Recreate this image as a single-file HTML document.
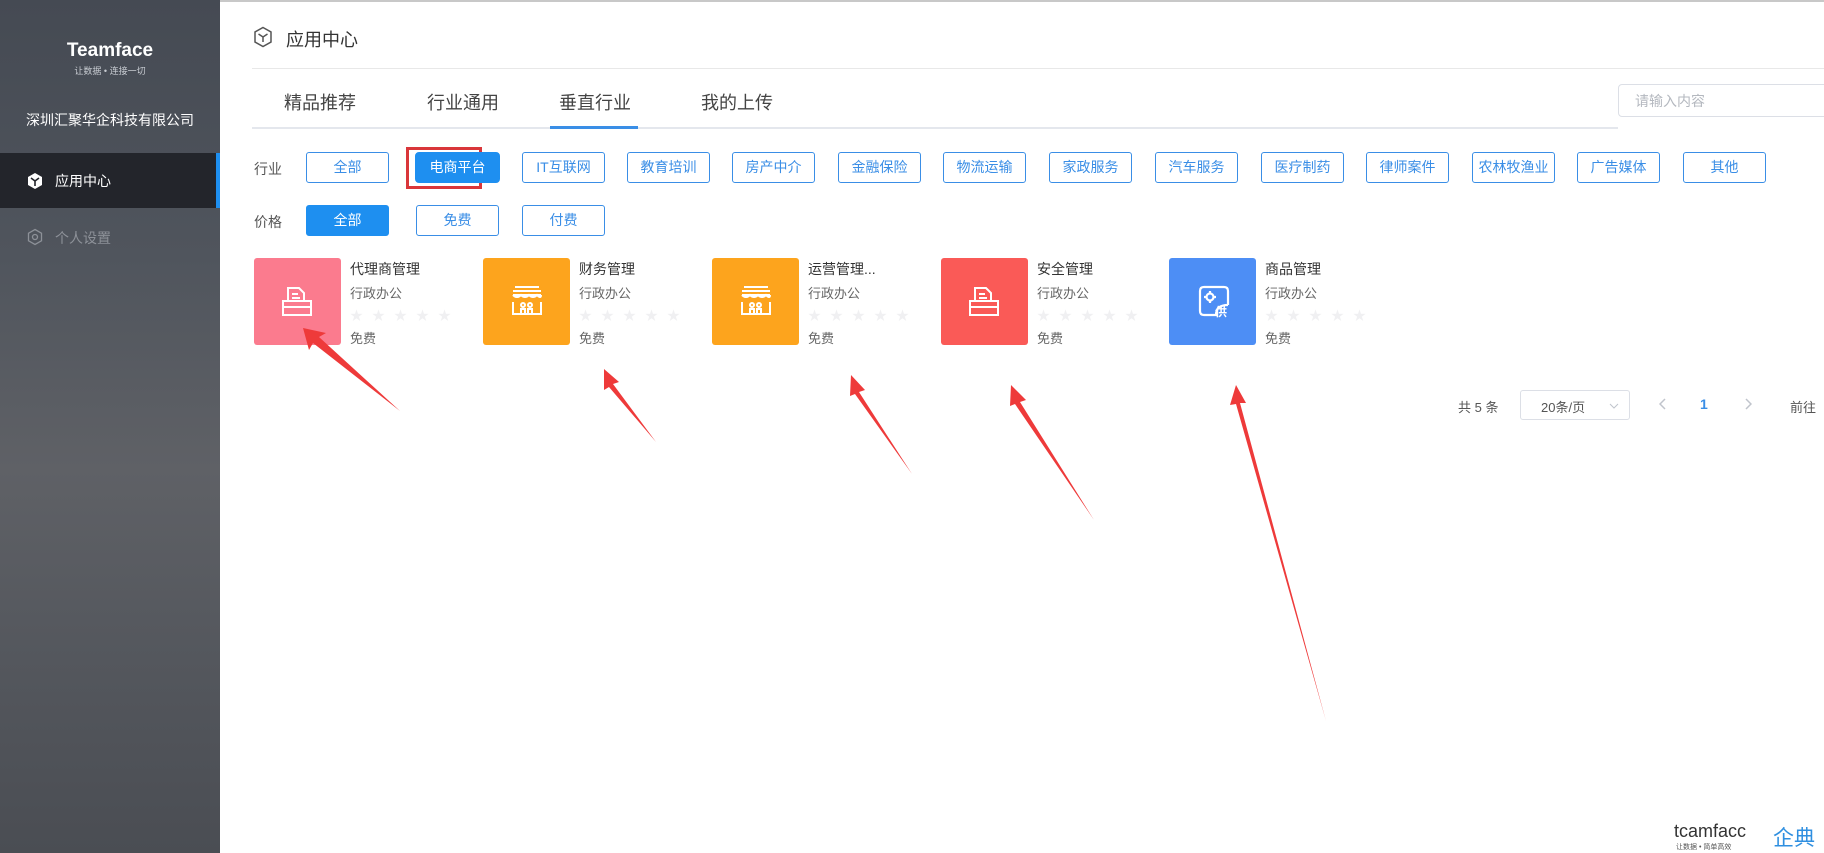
<!DOCTYPE html>
<html><head><meta charset="utf-8">
<style>
*{margin:0;padding:0;box-sizing:border-box}
body{width:1824px;height:853px;overflow:hidden;background:#fff;font-family:"Liberation Sans","Noto Sans CJK SC",sans-serif;position:relative;color:#333}
.abs{position:absolute;white-space:nowrap}
#side{position:absolute;left:0;top:0;width:220px;height:853px;background:linear-gradient(180deg,#454a53 0%,#50555d 30%,#5f6166 55%,#55585e 75%,#4a4d53 100%)}
.btn{position:absolute;height:31px;width:83px;border:1px solid #3a8ee6;border-radius:3px;color:#3a8ee6;font-size:14px;text-align:center;line-height:29px;background:#fff}
.btn.on{background:#1e8ff0;color:#fff;border-color:#1e8ff0}
.card .ic{position:absolute;width:87px;height:87px;border-radius:3px}
.t{font-size:14px;color:#333}
.s{font-size:13px;color:#666}
.star{font-size:13px;color:#f0f0f2;letter-spacing:9px}
</style></head><body>
<div class="abs" style="left:0;top:0;width:1824px;height:2px;background:#c8c8c8"></div>
<div id="side">
 <div class="abs" style="left:0;width:220px;top:40px;text-align:center;color:#fff;font-weight:bold;font-size:19px">Teamface</div>
 <div class="abs" style="left:0;width:220px;top:64px;text-align:center;color:#c8ccd2;font-size:9px">让数据 • 连接一切</div>
 <div class="abs" style="left:0;width:220px;top:110px;text-align:center;color:#fff;font-size:14px">深圳汇聚华企科技有限公司</div>
 <div class="abs" style="left:0;top:153px;width:220px;height:55px;background:#23252b"></div>
 <div class="abs" style="left:216px;top:153px;width:4px;height:55px;background:#1e8ff0"></div>
 <svg class="abs" style="left:27px;top:172px" width="16" height="18" viewBox="0 0 16 18"><path d="M8 1L15 5V13L8 17L1 13V5Z" fill="#fff"/><path d="M4 6L8 9L12 6M8 9V14" stroke="#23252b" stroke-width="1.6" fill="none"/></svg>
 <div class="abs" style="left:55px;top:171px;color:#fff;font-size:14px">应用中心</div>
 <svg class="abs" style="left:26px;top:228px" width="18" height="18" viewBox="0 0 18 18"><path d="M9 1.5L15.5 5.2V12.8L9 16.5L2.5 12.8V5.2Z" stroke="#8d9198" stroke-width="1.3" fill="none"/><circle cx="9" cy="9" r="2.5" stroke="#8d9198" stroke-width="1.3" fill="none"/></svg>
 <div class="abs" style="left:55px;top:228px;color:#8d9198;font-size:14px">个人设置</div>
</div>

<svg class="abs" style="left:253px;top:26px" width="20" height="22" viewBox="0 0 20 22"><path d="M10 1.5L18 6V16L10 20.5L2 16V6Z" stroke="#555" stroke-width="1.5" fill="none"/><path d="M5.5 8L10 11L14.5 8M10 11V16" stroke="#555" stroke-width="1.5" fill="none"/></svg>
<div class="abs" style="left:286px;top:26px;font-size:18px;color:#333">应用中心</div>
<div class="abs" style="left:252px;top:68px;width:1572px;height:1px;background:#e8e8e8"></div>

<div class="abs" style="left:284px;top:89px;font-size:18px;color:#444">精品推荐</div>
<div class="abs" style="left:427px;top:89px;font-size:18px;color:#444">行业通用</div>
<div class="abs" style="left:559px;top:89px;font-size:18px;color:#444">垂直行业</div>
<div class="abs" style="left:701px;top:89px;font-size:18px;color:#444">我的上传</div>
<div class="abs" style="left:252px;top:127px;width:1366px;height:2px;background:#e4e7ed"></div>
<div class="abs" style="left:550px;top:126px;width:88px;height:3px;background:#3a8ee6"></div>
<div class="abs" style="left:1618px;top:84px;width:220px;height:33px;border:1px solid #dcdfe6;border-radius:4px"></div>
<div class="abs" style="left:1635px;top:91px;font-size:14px;color:#b4b8bf">请输入内容</div>

<div class="abs" style="left:254px;top:159px;font-size:14px;color:#555">行业</div>
<div class="btn" style="left:306px;top:152px">全部</div>
<div class="abs" style="left:406px;top:147px;width:76px;height:42px;border:3px solid #d9363a"></div>
<div class="btn on" style="left:415px;top:152px;width:85px;border-radius:4px">电商平台</div>
<div class="btn" style="left:522px;top:152px">IT互联网</div>
<div class="btn" style="left:627px;top:152px">教育培训</div>
<div class="btn" style="left:732px;top:152px">房产中介</div>
<div class="btn" style="left:838px;top:152px">金融保险</div>
<div class="btn" style="left:943px;top:152px">物流运输</div>
<div class="btn" style="left:1049px;top:152px">家政服务</div>
<div class="btn" style="left:1155px;top:152px">汽车服务</div>
<div class="btn" style="left:1261px;top:152px">医疗制药</div>
<div class="btn" style="left:1366px;top:152px">律师案件</div>
<div class="btn" style="left:1472px;top:152px">农林牧渔业</div>
<div class="btn" style="left:1577px;top:152px">广告媒体</div>
<div class="btn" style="left:1683px;top:152px">其他</div>

<div class="abs" style="left:254px;top:212px;font-size:14px;color:#555">价格</div>
<div class="btn on" style="left:306px;top:205px">全部</div>
<div class="btn" style="left:416px;top:205px">免费</div>
<div class="btn" style="left:522px;top:205px">付费</div>

<div class="card">
 <div class="ic" style="left:254px;top:258px;background:#fb7b8e"></div>
 <svg class="abs" style="left:279px;top:285px" width="36" height="32" viewBox="0 0 36 32" fill="none" stroke="#fff" stroke-width="2"><path d="M9 16V3H20L25 8V16"/><path d="M13 9H19M13 13H21"/><path d="M4 16H32V30H4Z"/><path d="M4 22H32"/></svg>
 <div class="abs t" style="left:350px;top:259px">代理商管理</div>
 <div class="abs s" style="left:350px;top:283px">行政办公</div>
 <div class="abs star" style="left:350px;top:305px">★★★★★</div>
 <div class="abs s" style="left:350px;top:328px">免费</div>
</div>
<div class="card">
 <div class="ic" style="left:483px;top:258px;background:#fda41d"></div>
 <svg class="abs" style="left:509px;top:284px" width="36" height="34" viewBox="0 0 36 34" fill="none" stroke="#fff" stroke-width="2"><path d="M6 3H30M4 7H32M4 11H32"/><path d="M4 11Q8 15 12 11Q16 15 20 11Q24 15 28 11Q32 15 32 11"/><path d="M4 18V30H32V18"/><circle cx="14" cy="21" r="2"/><circle cx="21" cy="21" r="2"/><path d="M12 30V25H16V30M19 30V25H23V30"/></svg>
 <div class="abs t" style="left:579px;top:259px">财务管理</div>
 <div class="abs s" style="left:579px;top:283px">行政办公</div>
 <div class="abs star" style="left:579px;top:305px">★★★★★</div>
 <div class="abs s" style="left:579px;top:328px">免费</div>
</div>
<div class="card">
 <div class="ic" style="left:712px;top:258px;background:#fda41d"></div>
 <svg class="abs" style="left:738px;top:284px" width="36" height="34" viewBox="0 0 36 34" fill="none" stroke="#fff" stroke-width="2"><path d="M6 3H30M4 7H32M4 11H32"/><path d="M4 11Q8 15 12 11Q16 15 20 11Q24 15 28 11Q32 15 32 11"/><path d="M4 18V30H32V18"/><circle cx="14" cy="21" r="2"/><circle cx="21" cy="21" r="2"/><path d="M12 30V25H16V30M19 30V25H23V30"/></svg>
 <div class="abs t" style="left:808px;top:259px">运营管理...</div>
 <div class="abs s" style="left:808px;top:283px">行政办公</div>
 <div class="abs star" style="left:808px;top:305px">★★★★★</div>
 <div class="abs s" style="left:808px;top:328px">免费</div>
</div>
<div class="card">
 <div class="ic" style="left:941px;top:258px;background:#fa5a57"></div>
 <svg class="abs" style="left:966px;top:285px" width="36" height="32" viewBox="0 0 36 32" fill="none" stroke="#fff" stroke-width="2"><path d="M9 16V3H20L25 8V16"/><path d="M13 9H19M13 13H21"/><path d="M4 16H32V30H4Z"/><path d="M4 22H32"/></svg>
 <div class="abs t" style="left:1037px;top:259px">安全管理</div>
 <div class="abs s" style="left:1037px;top:283px">行政办公</div>
 <div class="abs star" style="left:1037px;top:305px">★★★★★</div>
 <div class="abs s" style="left:1037px;top:328px">免费</div>
</div>
<div class="card">
 <div class="ic" style="left:1169px;top:258px;background:#4d8ef5"></div>
 <svg class="abs" style="left:1196px;top:283px" width="36" height="36" viewBox="0 0 36 36" fill="none" stroke="#fff" stroke-width="2.2"><path d="M22 32H8Q4 32 4 28V8Q4 4 8 4H28Q32 4 32 8V22"/><circle cx="14" cy="14" r="3.5"/><path d="M14 8V10M14 18V20M8 14H10M18 14H20"/><path d="M20 32Q20 22 32 22" /></svg>
 <div class="abs" style="left:1215px;top:303px;color:#fff;font-size:12px;font-weight:bold">供</div>
 <div class="abs t" style="left:1265px;top:259px">商品管理</div>
 <div class="abs s" style="left:1265px;top:283px">行政办公</div>
 <div class="abs star" style="left:1265px;top:305px">★★★★★</div>
 <div class="abs s" style="left:1265px;top:328px">免费</div>
</div>

<div class="abs" style="left:1458px;top:397px;font-size:13px;color:#555">共 5 条</div>
<div class="abs" style="left:1520px;top:390px;width:110px;height:30px;border:1px solid #dcdfe6;border-radius:3px"></div>
<div class="abs" style="left:1541px;top:397px;font-size:13px;color:#555">20条/页</div>
<svg class="abs" style="left:1609px;top:403px" width="10" height="7" viewBox="0 0 10 7"><path d="M1 1L5 5L9 1" stroke="#c0c4cc" fill="none"/></svg>
<svg class="abs" style="left:1659px;top:398px" width="8" height="12" viewBox="0 0 8 12"><path d="M6 1L1 6L6 11" stroke="#c0c4cc" stroke-width="1.5" fill="none"/></svg>
<div class="abs" style="left:1700px;top:396px;font-size:14px;font-weight:bold;color:#3a8ee6">1</div>
<svg class="abs" style="left:1744px;top:398px" width="8" height="12" viewBox="0 0 8 12"><path d="M2 1L7 6L2 11" stroke="#c0c4cc" stroke-width="1.5" fill="none"/></svg>
<div class="abs" style="left:1790px;top:397px;font-size:13px;color:#555">前往</div>

<svg class="abs" style="left:0;top:0" width="1824" height="853" viewBox="0 0 1824 853">
<g fill="#ee3a3a">
<polygon points="303,328 326,333 319,337 400,411 313,343 309,350"/>
<polygon points="604,369 619,382 613,384 656,442 609,387 604,390"/>
<polygon points="851,375 865,390 859,392 912,474 855,394 850,396"/>
<polygon points="1011,385 1026,400 1020,402 1094,520 1015,404 1010,406"/>
<polygon points="1236,385 1246,403 1240,403 1326,721 1236,404 1230,405"/>
</g>
</svg>

<div class="abs" style="left:1674px;top:821px;font-size:18px;color:#333;font-family:'Liberation Sans',sans-serif">tcamfacc</div>
<div class="abs" style="left:1676px;top:842px;font-size:7px;color:#555">让数据 • 简单高效</div>
<div class="abs" style="left:1773px;top:822px;font-size:21px;color:#2f8fe0">企典</div>
</body></html>
